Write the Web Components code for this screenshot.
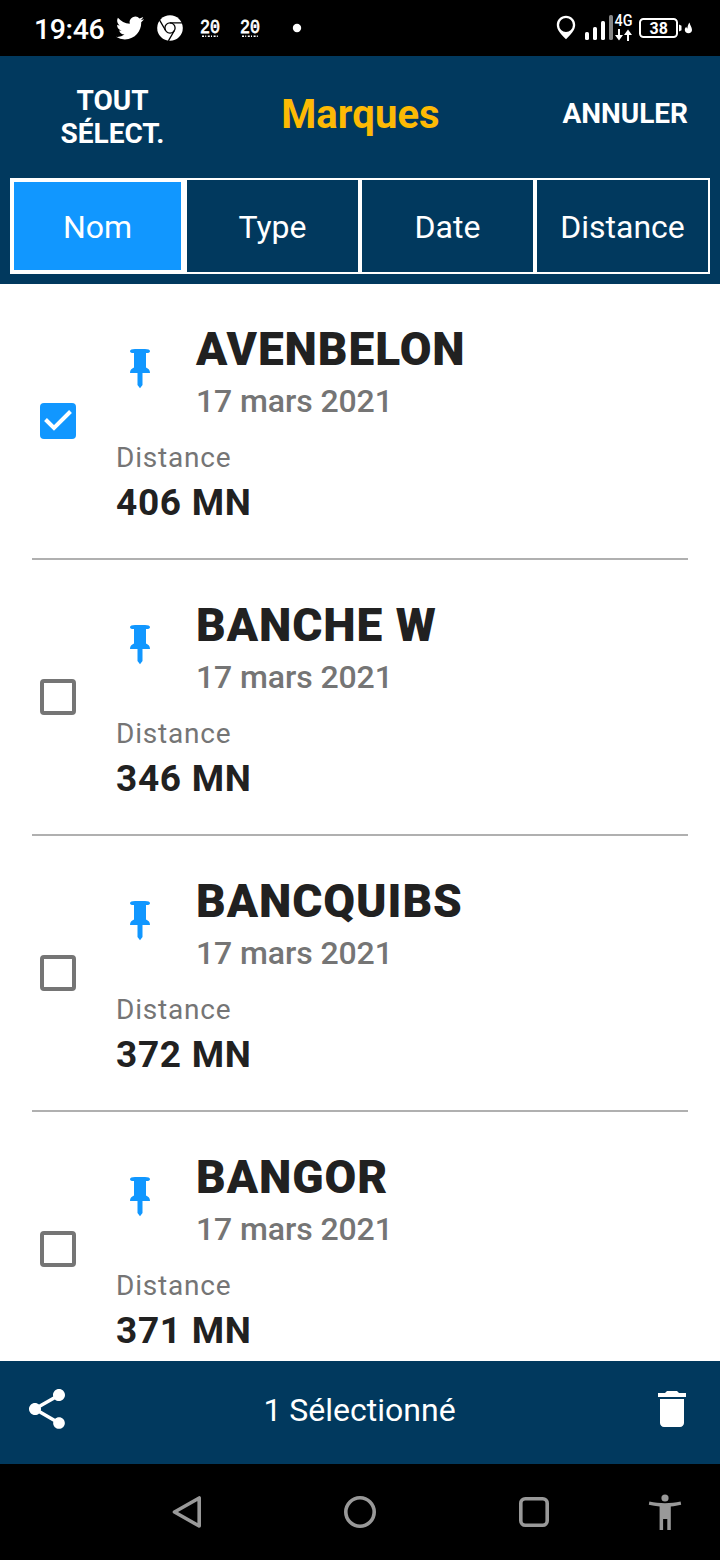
<!DOCTYPE html>
<html lang="fr">
<head>
<meta charset="utf-8">
<meta name="viewport" content="width=device-width, initial-scale=1">
<title>Marques</title>
<style>
  html, body { margin: 0; height: 100%; }
  body { font-family: Roboto, "Liberation Sans", sans-serif; overflow: hidden; }
</style>
</head>
<body>
<marks-screen></marks-screen>

<script>
const html = (markup) => {
  const template = document.createElement('template');
  template.innerHTML = markup;
  return template;
};

class BaseElement extends HTMLElement {
  constructor() {
    super();
    const shadowRoot = this.attachShadow({ mode: 'open' });
    shadowRoot.appendChild(this.constructor.template.content.cloneNode(true));
  }
}

// ---- android status bar ----
class StatusBar extends BaseElement {
  static template = html(`
    <style>
      :host { display: flex; align-items: center; justify-content: space-between; height: 56px; background: #000; color: #fff; padding: 0 27px 0 34px; box-sizing: border-box; }
      .side { display: flex; align-items: center; height: 56px; }
      svg { display: block; flex: none; }
      .time { flex: none; font-size: 28.500px; font-weight: 500; letter-spacing: -.4px; line-height: 34px; margin-top: 3px; width: 82px; }
    </style>
    <div class="side">
      <div class="time">19:46</div>
      <svg width="190" height="56" viewBox="116 0 190 56" fill="#fff">
        <g transform="translate(116 14) scale(1.17)">
          <path d="M23.95 4.57a10 10 0 0 1-2.82.77 4.96 4.96 0 0 0 2.16-2.72c-.95.55-2 .95-3.13 1.18a4.92 4.92 0 0 0-8.38 4.48C7.69 8.09 4.07 6.13 1.64 3.16a4.82 4.82 0 0 0-.67 2.48c0 1.71.87 3.21 2.19 4.1a4.9 4.9 0 0 1-2.23-.62v.06a4.92 4.92 0 0 0 3.95 4.83 5 5 0 0 1-2.21.08 4.94 4.94 0 0 0 4.6 3.42A9.87 9.87 0 0 1 0 19.54a14 14 0 0 0 7.55 2.21c9.05 0 14-7.5 14-13.98 0-.21 0-.42-.02-.63a9.94 9.94 0 0 0 2.46-2.55z"/>
        </g>
        <circle cx="170" cy="28" r="12.800"/>
        <g fill="none" stroke="#000" stroke-width="1.300">
          <circle cx="170" cy="28" r="5.100"/>
          <path d="M170 22.900h12M165.600 30.500l-6-10.400M174.400 30.500l-6 10.400"/>
        </g>
        <g font-family="Liberation Mono, monospace" font-weight="400" font-size="21" text-anchor="middle" stroke="#fff" stroke-width=".8">
          <text x="210" y="33" textLength="20" lengthAdjust="spacingAndGlyphs">20</text>
          <text x="250" y="33" textLength="20" lengthAdjust="spacingAndGlyphs">20</text>
        </g>
        <path d="M202 36.200h17M242 36.200h17" stroke="#fff" stroke-width="1.600" stroke-dasharray="2 1.200 1 1.600"/>
        <circle cx="297" cy="28" r="4.200"/>
      </svg>
    </div>
    <svg width="138" height="56" viewBox="555 0 138 56" fill="#fff">
      <path fill-rule="evenodd" d="M566 15.700c5.200 0 9.200 4 9.200 9.200 0 5-4.500 9.600-9.200 14.300-4.700-4.700-9.200-9.300-9.200-14.300 0-5.200 4-9.200 9.200-9.200zm0 2.400a6.900 6.900 0 1 0 0 13.800 6.900 6.900 0 0 0 0-13.800z"/>
      <rect x="585" y="32" width="4" height="8" rx="1.600"/>
      <rect x="593" y="27" width="4" height="13" rx="1.600"/>
      <rect x="601" y="21" width="4" height="19" rx="1.600"/>
      <rect x="609" y="15" width="4" height="25" rx="1.600" fill="#858585"/>
      <text x="614.500" y="26" font-family="Roboto, sans-serif" font-weight="500" font-size="17" textLength="18" lengthAdjust="spacingAndGlyphs">4G</text>
      <path d="M618 29h2v6h3l-4 5.500-4-5.500h3zM627 41h2v-6h3l-4-5.500-4 5.500h3z"/>
      <rect x="640" y="19" width="37" height="18" rx="3.500" fill="none" stroke="#fff" stroke-width="2"/>
      <path d="M679 24.500l2.500 1.200v4.600l-2.500 1.200z"/>
      <text x="658.700" y="34" font-family="Roboto, sans-serif" font-weight="700" font-size="16" text-anchor="middle">38</text>
      <path d="M689.500 22.500c.5 3 2.500 4.500 2.500 7.500 0 2-1.300 3.200-3.500 3.200s-3.700-1.200-3.700-3.200c0-1.600.8-2.600 1.600-3.200.1 1 .4 1.500 1 1.600.2-2.200.8-4.200 2.100-5.900z"/>
    </svg>
  `);
}
customElements.define('status-bar', StatusBar);

// ---- title bar: start / end slots for the actions, title in the middle ----
class TitleBar extends BaseElement {
  static template = html(`
    <style>
      :host { display: flex; align-items: center; height: 122px; padding: 0 32px; box-sizing: border-box; color: #fff; font-size: 28px; font-weight: 700; line-height: 33px; text-transform: uppercase; }
      .start { width: 161px; text-align: center; }
      .start ::slotted(*) { display: block; width: 120px; margin: 0 auto; }
      .title { flex: 1; text-align: center; color: #fdba04; font-size: 40px; line-height: 46px; letter-spacing: .1px; text-transform: none; padding-bottom: 5px; }
      .end { width: 160px; text-align: right; padding-bottom: 7px; }
    </style>
    <div class="start"><slot name="start"></slot></div>
    <div class="title"><slot></slot></div>
    <div class="end"><slot name="end"></slot></div>
  `);
}
customElements.define('title-bar', TitleBar);

class SortTab extends BaseElement {
  static template = html(`
    <style>
      :host { width: 175px; flex: none; display: flex; align-items: center; justify-content: center; height: 96px; box-sizing: border-box; border: 2px solid #fff; padding-top: 2px; color: #fff; font-size: 32px; line-height: 38px; }
      :host([selected]) { border-width: 4px; background: #1197ff; }
    </style>
    <slot></slot>
  `);
}
customElements.define('sort-tab', SortTab);

class CheckBox extends BaseElement {
  static template = html(`
    <style>
      :host { display: block; width: 36px; height: 36px; box-sizing: border-box; border: 4px solid #757575; border-radius: 4px; }
      svg { display: none; }
      :host([checked]) { border: 0; background: #1197ff; }
      :host([checked]) svg { display: block; }
    </style>
    <svg width="36" height="36" viewBox="0 0 36 36"><path d="M5.500 16.500l8.500 8.500L30.500 8.500" fill="none" stroke="#fff" stroke-width="4"/></svg>
  `);
}
customElements.define('check-box', CheckBox);

// ---- one mark of the list ----
class MarkItem extends BaseElement {
  static template = html(`
    <style>
      :host { display: flex; align-items: center; height: 276px; flex: none; box-sizing: border-box; margin: 0 32px; padding: 0 8px; border-bottom: 2px solid #b0b0b0; color: #212121; }
      .content { margin-left: 40px; padding-top: 5px; }
      .head { display: flex; align-items: center; gap: 32px; }
      .name { font-size: 46px; font-weight: 900; line-height: 54px; letter-spacing: .95px; white-space: nowrap; }
      .date { margin-top: 6px; font-size: 32px; font-weight: 500; line-height: 38px; letter-spacing: -.1px; color: #757575; }
      .label { margin-top: 21px; font-size: 28px; line-height: 34px; letter-spacing: .8px; color: #757575; }
      .value { margin-top: 6px; font-size: 37px; font-weight: 700; line-height: 44px; letter-spacing: .7px; }
    </style>
    <check-box></check-box>
    <div class="content">
      <div class="head">
        <svg width="48" height="48" viewBox="0 0 48 48" fill="#1197ff">
          <path d="M19 2h10c3 0 5 .8 5 2.200 0 1.300-1.500 1.800-4 1.800v14.500c2.500 1 4 2.700 4 5.500h-7.500v12L24 41.200 21.500 38V26H14c0-2.800 1.500-4.500 4-5.500V6c-2.500 0-4-.5-4-1.800C14 2.800 16 2 19 2z"/>
        </svg>
        <div>
          <div class="name"><slot></slot></div>
          <div class="date"></div>
        </div>
      </div>
      <div class="label">Distance</div>
      <div class="value"></div>
    </div>
  `);

  static get observedAttributes() {
    return ['date', 'distance', 'checked'];
  }

  attributeChangedCallback() {
    this.shadowRoot.querySelector('.date').textContent = this.getAttribute('date');
    this.shadowRoot.querySelector('.value').textContent = this.getAttribute('distance');
    this.shadowRoot.querySelector('check-box').toggleAttribute('checked', this.hasAttribute('checked'));
  }
}
customElements.define('mark-item', MarkItem);

class ActionBar extends BaseElement {
  static template = html(`
    <style>
      :host { display: flex; align-items: center; justify-content: space-between; height: 103px; box-sizing: border-box; padding: 0 24px 7px 23px; background: #01395e; color: #fff; font-size: 32px; line-height: 38px; }
      svg { display: block; fill: #fff; }
      span { padding-top: 2px; }
    </style>
    <svg width="48" height="48" viewBox="0 0 24 24"><path d="M18 16.080c-.76 0-1.440.3-1.960.77L8.910 12.700c.05-.23.09-.46.09-.7s-.04-.47-.09-.7l7.050-4.110c.54.5 1.250.81 2.040.81 1.660 0 3-1.340 3-3s-1.340-3-3-3-3 1.340-3 3c0 .24.04.47.09.7L8.040 9.810C7.500 9.310 6.790 9 6 9c-1.660 0-3 1.340-3 3s1.340 3 3 3c.79 0 1.500-.31 2.040-.81l7.120 4.160c-.05.21-.08.43-.08.65 0 1.610 1.310 2.920 2.920 2.920s2.920-1.310 2.920-2.920-1.310-2.920-2.920-2.920z"/></svg>
    <span><slot></slot></span>
    <svg width="48" height="48" viewBox="0 0 24 24"><path d="M6 19c0 1.100.9 2 2 2h8c1.100 0 2-.9 2-2V7H6v12zM19 4h-3.500l-1-1h-5l-1 1H5v2h14V4z"/></svg>
  `);
}
customElements.define('action-bar', ActionBar);

class NavBar extends BaseElement {
  static template = html(`
    <style>
      :host { display: flex; align-items: center; height: 96px; background: #000; padding-left: 163px; }
      svg { display: block; width: 48px; height: 48px; margin-right: 126px; fill: none; stroke: #999; stroke-width: 3.600; }
      svg:nth-of-type(1) { margin-right: 125px; }
      svg:nth-of-type(3) { margin-right: 83px; }
      svg:last-of-type { margin: 0; fill: #999; stroke: none; }
    </style>
    <svg viewBox="0 0 48 48"><path d="M36.200 10v28L11.500 24z" stroke-linejoin="round"/></svg>
    <svg viewBox="0 0 48 48"><circle cx="24" cy="24" r="14.200"/></svg>
    <svg viewBox="0 0 48 48"><rect x="10.800" y="10.800" width="26.400" height="26.400" rx="4.500"/></svg>
    <svg viewBox="0 0 48 48"><circle cx="24" cy="10" r="3.600"/><path d="M8.400 13.500c10 2.300 21.200 2.300 31.200 0l.6 3.200c-3.500.9-6.600 1.400-10.400 1.700V42h-3.500V31h-4.200v11h-3.500V18.400c-3.800-.3-7.400-.8-10.800-1.700z"/></svg>
  `);
}
customElements.define('nav-bar', NavBar);

class MarksScreen extends BaseElement {
  static template = html(`
    <style>
      :host { display: flex; flex-direction: column; height: 1560px; width: 720px; background: #fff; }
      header { flex: none; height: 228px; background: #01395e; }
      nav { display: flex; padding: 0 10px; }
      main { flex: 1; min-height: 0; overflow: hidden; display: flex; flex-direction: column; }
      status-bar, action-bar, nav-bar { flex: none; }
    </style>
    <status-bar></status-bar>
    <header>
      <title-bar>
        <span slot="start">Tout Sélect.</span>
        Marques
        <span slot="end">Annuler</span>
      </title-bar>
      <nav>
        <sort-tab selected>Nom</sort-tab>
        <sort-tab>Type</sort-tab>
        <sort-tab>Date</sort-tab>
        <sort-tab>Distance</sort-tab>
      </nav>
    </header>
    <main>
      <mark-item checked date="17 mars 2021" distance="406 MN">AVENBELON</mark-item>
      <mark-item date="17 mars 2021" distance="346 MN">BANCHE W</mark-item>
      <mark-item date="17 mars 2021" distance="372 MN">BANCQUIBS</mark-item>
      <mark-item date="17 mars 2021" distance="371 MN">BANGOR</mark-item>
    </main>
    <action-bar>1 Sélectionné</action-bar>
    <nav-bar></nav-bar>
  `);
}
customElements.define('marks-screen', MarksScreen);
</script>
</body>
</html>
